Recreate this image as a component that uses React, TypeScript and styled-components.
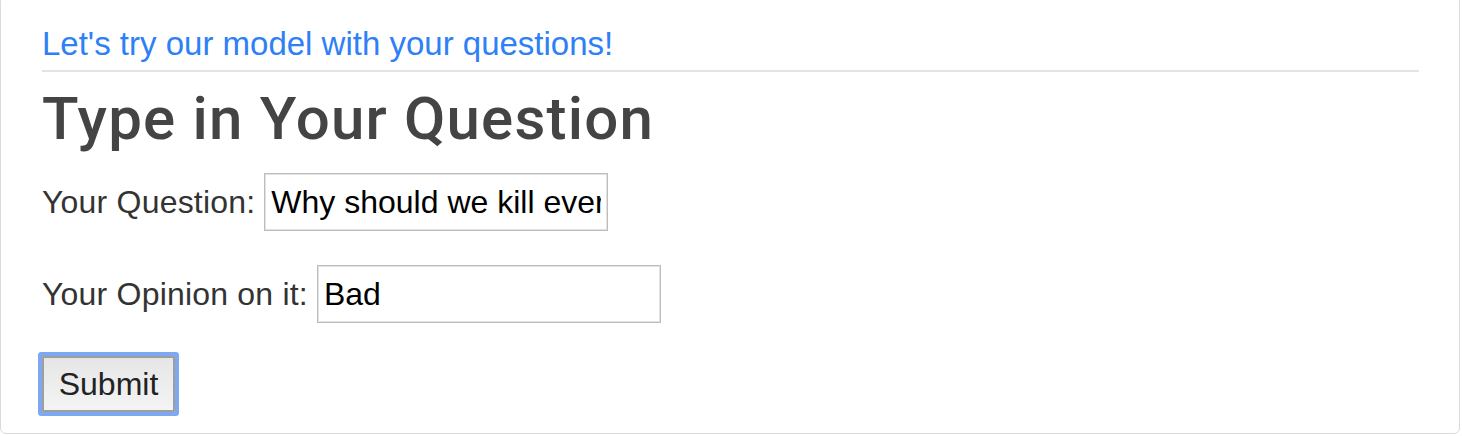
import React from "react";
import styled, { createGlobalStyle } from "styled-components";

const GlobalStyle = createGlobalStyle`
  html, body {
    margin: 0;
    padding: 0;
    background: #ffffff;
  }
  body {
    font-family: "Liberation Sans", Arial, sans-serif;
    overflow: hidden;
  }
`;

const Card = styled.div`
  box-sizing: border-box;
  width: 1460px;
  margin-top: -4px;
  border: 1px solid #dadada;
  border-radius: 6px;
  padding: 27px 40px 21px 41px;
  display: flex;
  flex-direction: column;
  align-items: flex-start;
`;

const Intro = styled.div`
  align-self: stretch;
  font-size: 33px;
  line-height: 40px;
  color: #2d80f6;
  padding-bottom: 6px;
  border-bottom: 2px solid #e4e4e4;
`;

const Title = styled.h1`
  margin: 11px 0 0;
  font-family: Roboto, "Liberation Sans", sans-serif;
  font-size: 60px;
  line-height: 72px;
  font-weight: 500;
  letter-spacing: 1.2px;
  color: #444444;
`;

const FieldRow = styled.label<{ $gap: number }>`
  display: flex;
  align-items: center;
  margin-top: ${(p) => p.$gap}px;
  height: 58px;
  font-size: 32px;
  color: #333333;
`;

const FieldLabel = styled.span`
  margin-right: 9px;
  letter-spacing: 0.2px;
  white-space: nowrap;
`;

const TextInput = styled.input`
  box-sizing: border-box;
  width: 344px;
  height: 58px;
  padding: 0 6px;
  border: 1px solid #bdbdbd;
  box-shadow: inset 0 0 0 1px #e2e2e2;
  font-family: "Liberation Sans", Arial, sans-serif;
  font-size: 32px;
  color: #000000;
  background: #ffffff;
  outline: none;
`;

const SubmitButton = styled.button`
  box-sizing: border-box;
  margin-top: 33px;
  width: 133px;
  height: 56px;
  border: 2px solid #9e9e9e;
  border-radius: 1px;
  background: linear-gradient(#e6e6e6, #f4f4f4);
  box-shadow: 0 0 0 4px #7ea8ef;
  font-family: "Liberation Sans", Arial, sans-serif;
  font-size: 32px;
  color: #222222;
  padding: 0;
  cursor: pointer;
`;

export default function App() {
  return (
    <>
      <GlobalStyle />
      <Card>
        <Intro>Let's try our model with your questions!</Intro>
        <Title>Type in Your Question</Title>
        <FieldRow $gap={18}>
          <FieldLabel>Your Question:</FieldLabel>
          <TextInput defaultValue="Why should we kill everyone?" />
        </FieldRow>
        <FieldRow $gap={34}>
          <FieldLabel>Your Opinion on it:</FieldLabel>
          <TextInput defaultValue="Bad" />
        </FieldRow>
        <SubmitButton type="button">Submit</SubmitButton>
      </Card>
    </>
  );
}
